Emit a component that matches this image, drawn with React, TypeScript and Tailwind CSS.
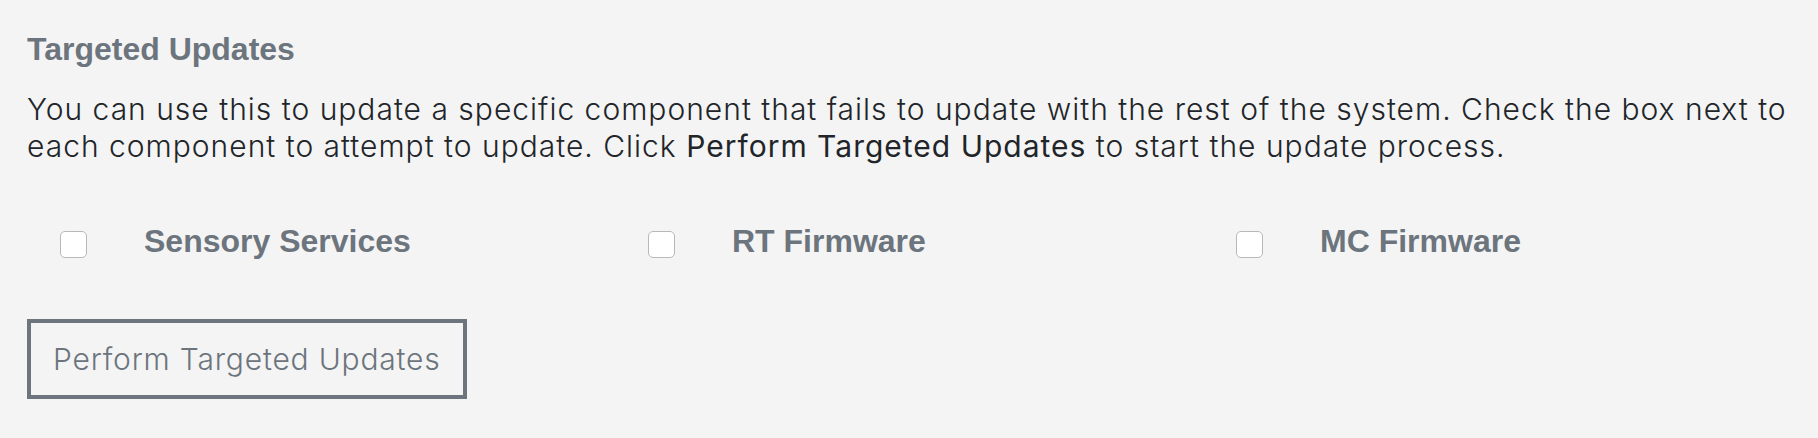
import { useState } from "react";

const components = ["Sensory Services", "RT Firmware", "MC Firmware"];

export default function App() {
  const [checked, setChecked] = useState<Record<string, boolean>>({});

  return (
    <div className="min-h-[438px] bg-[#f4f4f4] px-[27px] pt-[31px]">
      <h2 className="font-['Liberation_Sans',Arial,sans-serif] text-[32px] font-bold leading-[37px] text-[#6c757d]">
        Targeted Updates
      </h2>
      <p className="mt-[23px] font-['Inter',sans-serif] text-[30px] font-light leading-[37px] tracking-[1px] text-[#212529]">
        You can use this to update a specific component that fails to update with the rest of the system. Check the box
        next to each component to attempt to update. Click <span className="font-normal">Perform Targeted Updates</span>{" "}
        to start the update process.
      </p>

      {/* component checkboxes */}
      <div className="mt-[58px] grid grid-cols-3">
        {components.map((name) => (
          <label key={name} className="flex items-start">
            <input
              type="checkbox"
              checked={!!checked[name]}
              onChange={() => setChecked((c) => ({ ...c, [name]: !c[name] }))}
              className="ml-[33px] mt-[8px] h-[27px] w-[27px] appearance-none rounded-[5px] border border-[#b8b8b8] bg-white"
            />
            <span className="ml-[57px] font-['Liberation_Sans',Arial,sans-serif] text-[32px] font-bold leading-[37px] text-[#6c757d]">
              {name}
            </span>
          </label>
        ))}
      </div>

      <button className="mt-[59px] flex h-[80px] items-center border-[4px] border-[#6c757d] px-[22px] font-['Inter',sans-serif] text-[30px] font-light tracking-[0.8px] text-[#6c757d]">
        Perform Targeted Updates
      </button>
    </div>
  );
}
